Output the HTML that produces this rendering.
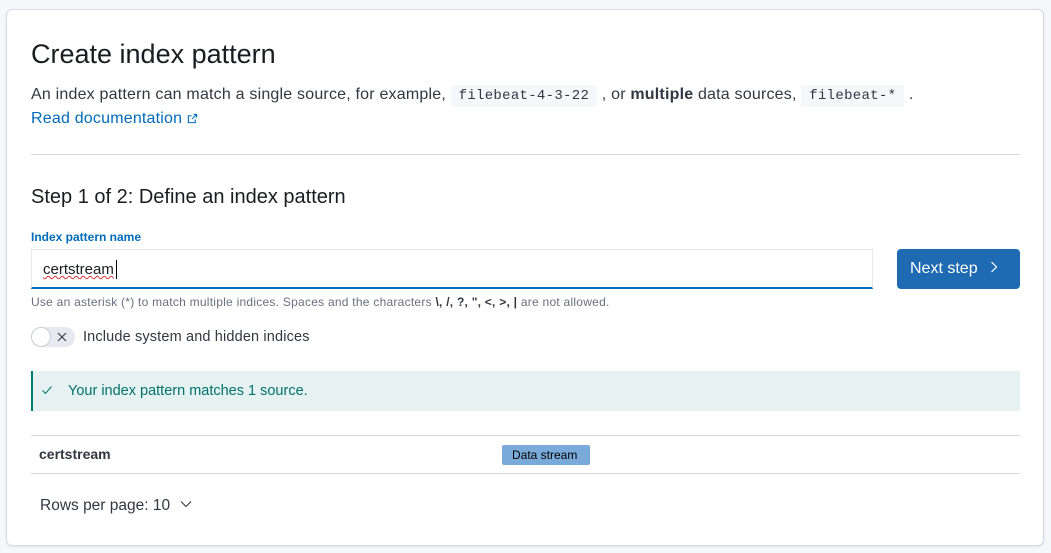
<!DOCTYPE html>
<html><head><style>
*{box-sizing:border-box;margin:0;padding:0}
body{width:1051px;height:553px;background:#f5f7fa;font-family:"Liberation Sans",sans-serif;color:#343741;position:relative;overflow:hidden}
.panel{position:absolute;left:6px;top:9px;width:1038px;height:537px;background:#fff;border:1px solid #d3dae6;border-radius:6px;box-shadow:0 1px 2px rgba(0,0,0,.08)}
.a{position:absolute;white-space:nowrap}
code{font-family:"Liberation Mono",monospace;font-size:14px;background:#f5f7fa;padding:3px 8px;color:#343741;letter-spacing:0.3px}
</style></head><body>
<div class="panel"></div>
<div class="a" style="left:31px;top:39px;font-size:27px;color:#1a1c21">Create index pattern</div>
<div class="a" style="left:31px;top:86px;font-size:16px;letter-spacing:0.2px">An index pattern can match a single source, for example, <code>filebeat-4-3-22</code> , or <b>multiple</b> data sources, <code>filebeat-*</code> .</div>
<div class="a" style="left:31px;top:110px;font-size:16px;color:#006bb8;letter-spacing:0.2px">Read documentation <svg width="11" height="11" viewBox="0 0 12 12" style="vertical-align:-1px"><path d="M7 1.5h3.5V5M10.5 1.5L5.5 6.5M9 7v3.5H1.5V3H5" fill="none" stroke="#006bb8" stroke-width="1.2"/></svg></div>
<div class="a" style="left:31px;top:154px;width:989px;height:1px;background:#d3dae6"></div>
<div class="a" style="left:31px;top:186px;font-size:20px;color:#1a1c21">Step 1 of 2: Define an index pattern</div>
<div class="a" style="left:31px;top:230px;font-size:12px;font-weight:bold;color:#006bb8">Index pattern name</div>
<div class="a" style="left:31px;top:249px;width:842px;height:40px;border:1px solid #e3e7ee;border-bottom:2px solid #006bb8;background:#fff"></div>
<div class="a" style="left:43px;top:261px;font-size:15px;color:#1a1c21;text-decoration:underline wavy #d33;text-decoration-thickness:1px">certstream</div>
<div class="a" style="left:116px;top:260px;width:1px;height:19px;background:#000"></div>
<div class="a" style="left:897px;top:249px;width:123px;height:40px;background:#1e6ab3;border-radius:4px;color:#fff;font-size:16px;padding:11px 0 0 13px">Next step <span style="display:inline-block;margin-left:8px"><svg width="8" height="12" viewBox="0 0 8 12"><path d="M1.5 1l5 5-5 5" fill="none" stroke="#fff" stroke-width="1.2"/></svg></span></div>
<div class="a" style="left:31px;top:295px;font-size:12px;color:#69707d;letter-spacing:0.25px">Use an asterisk (*) to match multiple indices. Spaces and the characters <b style="color:#343741">\, /, ?, ", &lt;, &gt;, |</b> are not allowed.</div>
<div class="a" style="left:31px;top:327px;width:44px;height:20px;border-radius:10px;background:#e6e9ef"></div>
<div class="a" style="left:31px;top:327px;width:20px;height:20px;border-radius:10px;background:#fff;border:1px solid #c8ccd4"></div>
<svg class="a" style="left:56px;top:331px" width="12" height="12" viewBox="0 0 12 12"><path d="M2 2l8 8M10 2l-8 8" stroke="#343741" stroke-width="1.1"/></svg>
<div class="a" style="left:83px;top:329px;font-size:14.5px;letter-spacing:0.15px">Include system and hidden indices</div>
<div class="a" style="left:31px;top:371px;width:989px;height:40px;background:#e6f1f1;border-left:2px solid #017d73"></div>
<svg class="a" style="left:41px;top:384px" width="12" height="12" viewBox="0 0 12 12"><path d="M1.5 6.5l3 3 6-7" fill="none" stroke="#017d73" stroke-width="1.1"/></svg>
<div class="a" style="left:68px;top:383px;font-size:14.5px;color:#00726b">Your index pattern matches 1 source.</div>
<div class="a" style="left:31px;top:435px;width:989px;height:1px;background:#d3dae6"></div>
<div class="a" style="left:39px;top:446px;font-size:14px;font-weight:bold;color:#343741">certstream</div>
<div class="a" style="left:502px;top:445px;width:88px;height:20px;background:#79aad9;border-radius:2px;font-size:12px;color:#000;padding:3px 0 0 10px">Data stream</div>
<div class="a" style="left:31px;top:473px;width:989px;height:1px;background:#d3dae6"></div>
<div class="a" style="left:40px;top:497px;font-size:15.5px">Rows per page: 10 <svg width="12" height="8" viewBox="0 0 12 8" style="margin-left:6px;vertical-align:2px"><path d="M1 1.5l5 5 5-5" fill="none" stroke="#343741" stroke-width="1.1"/></svg></div>
</body></html>
